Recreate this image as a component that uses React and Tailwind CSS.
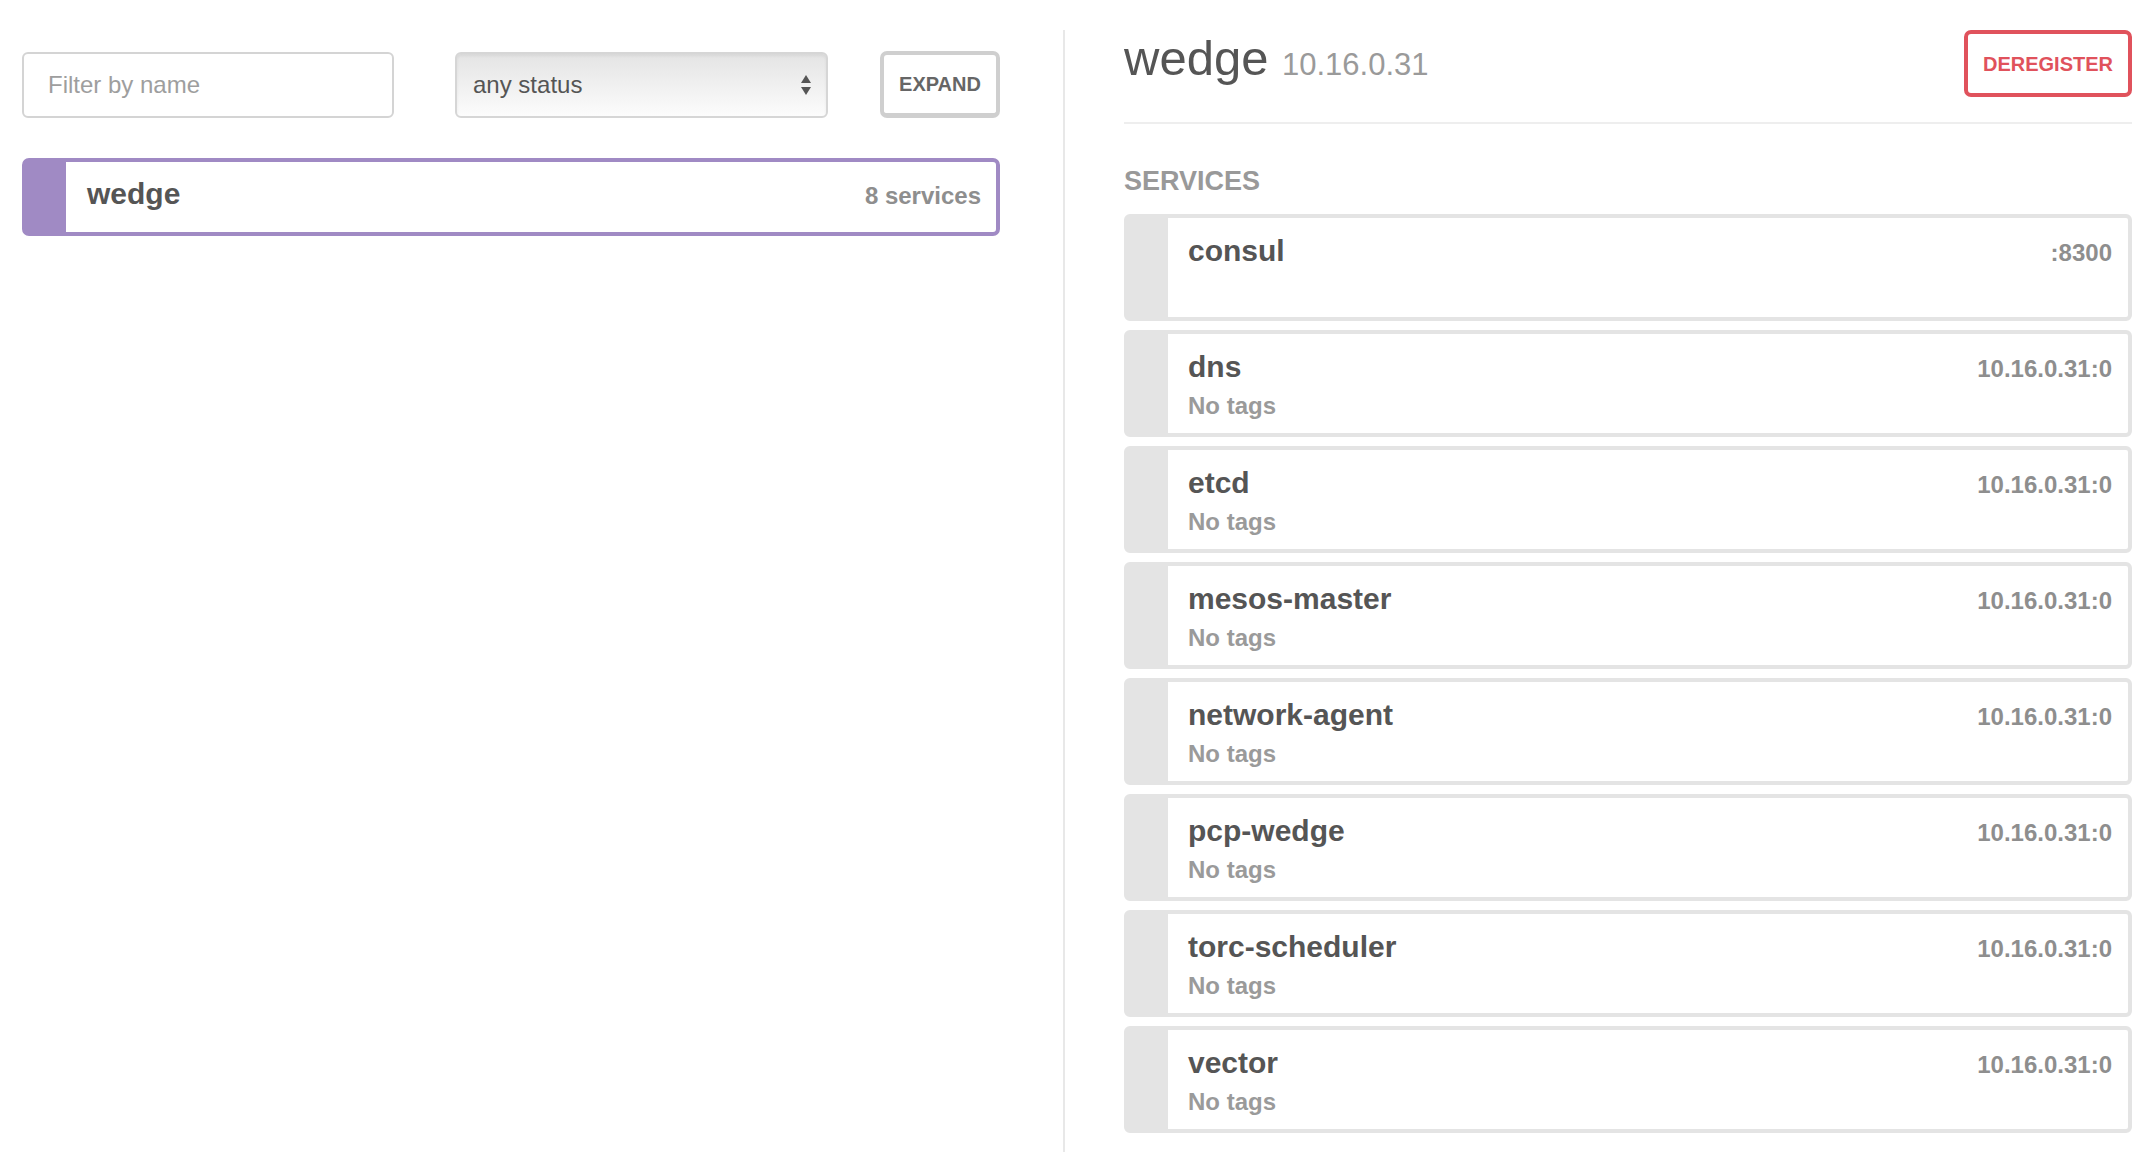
import { useState } from "react"

const services = [
  { name: "consul", address: ":8300", tags: null },
  { name: "dns", address: "10.16.0.31:0", tags: "No tags" },
  { name: "etcd", address: "10.16.0.31:0", tags: "No tags" },
  { name: "mesos-master", address: "10.16.0.31:0", tags: "No tags" },
  { name: "network-agent", address: "10.16.0.31:0", tags: "No tags" },
  { name: "pcp-wedge", address: "10.16.0.31:0", tags: "No tags" },
  { name: "torc-scheduler", address: "10.16.0.31:0", tags: "No tags" },
  { name: "vector", address: "10.16.0.31:0", tags: "No tags" },
]

const SortArrows = () => (
  <svg width="12" height="26" viewBox="0 0 12 26" className="shrink-0">
    <path d="M6 3 L11 11 L1 11 Z" fill="#555" />
    <path d="M6 23 L11 15 L1 15 Z" fill="#555" />
  </svg>
)

const ServiceCard = ({ service }) => (
  <div className="h-[107px] rounded-[6px] border-4 border-l-[44px] border-[#e4e4e4] bg-white">
    <div className="pl-[20px] pr-[16px] pt-[16px]">
      <div className="flex items-baseline justify-between">
        <h3 className="text-[30px] leading-[34px] font-bold text-[#555]">{service.name}</h3>
        <span className="text-[24px] leading-[34px] font-bold text-[#8e8e8e]">{service.address}</span>
      </div>
      {service.tags && (
        <p className="mt-[5px] text-[24px] leading-[30px] font-bold text-[#9a9a9a]">{service.tags}</p>
      )}
    </div>
  </div>
)

const App = () => {
  const [filter, setFilter] = useState("")

  return (
    <div className="min-h-screen bg-white flex px-[22px] pt-[30px] font-['Liberation_Sans',Arial,sans-serif] text-[#555]">
      {/* Nodes column */}
      <div className="w-[978px] shrink-0 pt-[21px]">
        <div className="flex items-center">
          <input
            value={filter}
            onChange={(e) => setFilter(e.target.value)}
            placeholder="Filter by name"
            className="w-[372px] h-[66px] rounded-[6px] border-2 border-[#d4d4d4] px-[24px] text-[24px] text-[#555] placeholder:text-[#9e9e9e] outline-none"
          />
          <div className="ml-[61px] w-[373px] h-[66px] rounded-[6px] border-2 border-[#d6d6d6] bg-gradient-to-b from-[#e4e4e4] to-[#fcfcfc] shadow-[inset_0_2px_3px_rgba(0,0,0,0.06)] flex items-center justify-between pl-[16px] pr-[14px]">
            <span className="text-[24px] text-[#555]">any status</span>
            <SortArrows />
          </div>
          <button className="ml-auto w-[120px] h-[67px] rounded-[7px] border-4 border-b-[5px] border-[#cfcfcf] bg-white text-[20px] font-bold text-[#666]">
            EXPAND
          </button>
        </div>

        <div className="mt-[40px] h-[78px] rounded-[7px] border-4 border-l-[44px] border-[#a08ac4] bg-white flex items-baseline justify-between pl-[21px] pr-[15px] pt-[15px]">
          <span className="text-[30px] leading-[34px] font-bold text-[#555]">wedge</span>
          <span className="text-[24px] leading-[34px] font-bold text-[#8e8e8e]">8 services</span>
        </div>
      </div>

      {/* Node detail column */}
      <div className="ml-[63px] flex-1 border-l-2 border-[#e8e8e8] pl-[59px]">
        <div className="h-[94px] border-b-2 border-[#eeeeee] flex items-start justify-between">
          <h1 className="mt-[4px] text-[49px] leading-none text-[#555]">
            wedge <span className="text-[31px] text-[#9a9a9a]">10.16.0.31</span>
          </h1>
          <button className="w-[168px] h-[67px] rounded-[7px] border-4 border-[#e0525c] bg-white text-[20px] font-bold text-[#e0525c]">
            DEREGISTER
          </button>
        </div>

        <h2 className="mt-[44px] text-[27px] leading-[27px] font-bold text-[#999]">SERVICES</h2>

        <div className="mt-[19px] flex flex-col gap-[9px]">
          {services.map((service) => (
            <ServiceCard key={service.name} service={service} />
          ))}
        </div>
      </div>
    </div>
  )
}

export default App
